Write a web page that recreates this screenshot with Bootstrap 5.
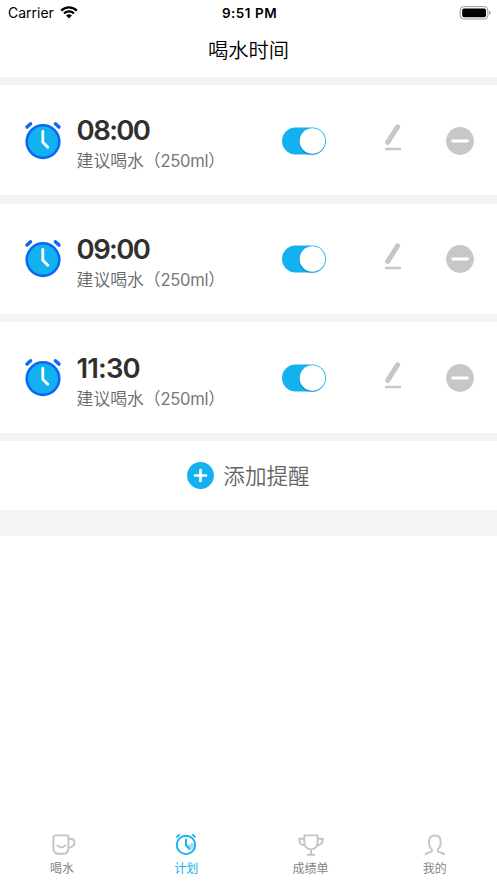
<!DOCTYPE html>
<html lang="zh-CN">
<head>
<meta charset="utf-8">
<meta name="viewport" content="width=device-width, initial-scale=1">
<title>喝水时间</title>
<link href="https://cdn.jsdelivr.net/npm/bootstrap@5.3.0/dist/css/bootstrap.min.css" rel="stylesheet">
<style>
body { font-family: Inter, "Noto Sans CJK SC", sans-serif; color: #000; height: 883px; overflow: hidden; }
svg { display: block; flex-shrink: 0; }
.status-bar { height: 26px; padding: 0 6px 0 8px; font-size: 14px; line-height: 26px; }
.status-bar .clock-text { font-weight: 600; font-size: 13.5px; letter-spacing: .5px; }
.side { flex: 1 1 0; }
.wifi { margin-left: 6px; }
.page-title { height: 51px; font-size: 20.3px; line-height: 49px; font-weight: 350; }
.plan { background: #f4f4f4; padding: 8px 0 26px; gap: 8.4px; }
.reminder { height: 110.3px; padding: 1px 23px 0 24px; background: #fff; }
.reminder .alarm { margin-bottom: 2px; }
.reminder .info { width: 204px; margin-left: 14.6px; padding-top: 5px; }
.reminder .time { font-size: 27.5px; line-height: 36px; font-weight: 600; color: #303030; letter-spacing: -1.6px; }
.reminder .time.slim { letter-spacing: -.9px; }
.reminder .hint { font-size: 16.8px; line-height: 26px; color: #666; font-weight: 350; white-space: nowrap; }
.reminder .amount { font-size: 16.6px; letter-spacing: -.3px; color: #777; font-weight: 400; }
.reminder .pencil { margin: 0 44px 5px auto; }
.add-row { height: 68.7px; padding-top: 1px; background: #fff; color: #666; font-size: 21.6px; font-weight: 350; gap: 9px; }
.tab-bar { height: 56px; }
.tab { flex: 1 1 0; color: #858585; font-size: 12px; line-height: 20px; text-decoration: none; }
.tab svg { fill: none; stroke: #c4c4c4; stroke-width: 1.9; stroke-linecap: round; stroke-linejoin: round; }
.tab.current { color: #13b1ef; }
.tab.current svg { stroke: #13b1ef; }
</style>
</head>
<body class="d-flex flex-column bg-white m-0">
<svg class="d-none">
  <symbol id="alarm" viewBox="0 0 38 42">
    <circle cx="19" cy="22.6" r="16.3" fill="#13b1ef" stroke="#0c68f4" stroke-width="2.6"/>
    <path d="M3 8.1 6.6 4.7M35 8.1 31.4 4.7" stroke="#0c68f4" stroke-width="3.4" stroke-linecap="round"/>
    <path d="M18.8 12.3v10.9l5 5" fill="none" stroke="#fff" stroke-width="2.8" stroke-linecap="round" stroke-linejoin="round"/>
  </symbol>
  <symbol id="toggle" viewBox="0 0 46 30">
    <rect x="1" y="1.5" width="44" height="27" rx="13.5" fill="#13b1ef"/>
    <circle cx="31" cy="15.8" r="13.2" fill="#087eaf" opacity=".5"/>
    <circle cx="31.4" cy="15" r="12.8" fill="#fff"/>
  </symbol>
  <symbol id="pencil" viewBox="0 0 18 28">
    <path d="M3.7 18.4 13.6 2.9" stroke="#c7c7c7" stroke-width="5" stroke-linecap="round"/>
    <path d="M2.1 25h13.8" stroke="#c7c7c7" stroke-width="2.4" stroke-linecap="round"/>
  </symbol>
  <symbol id="minus" viewBox="0 0 28 28">
    <circle cx="14" cy="14" r="13.9" fill="#c7c7c7"/>
    <path d="M6.7 14h14.8" stroke="#fff" stroke-width="2.9" stroke-linecap="round"/>
  </symbol>
</svg>

<div class="status-bar d-flex align-items-center">
  <div class="side d-flex align-items-center">
    <span>Carrier</span>
    <svg class="wifi" width="18" height="14" viewBox="0 0 18 14">
      <path d="M1.2 4.6a11.1 11.1 0 0 1 15.6 0M4 7.5a7.1 7.1 0 0 1 10 0" fill="none" stroke="#000" stroke-width="2.3"/>
      <path d="M6.1 9.6a4.1 4.1 0 0 1 5.8 0L9 12.5z"/>
    </svg>
  </div>
  <span class="clock-text">9:51 PM</span>
  <div class="side d-flex justify-content-end">
    <svg width="32" height="14" viewBox="0 0 32 14">
      <rect x="1.2" y=".6" width="27.6" height="12.4" rx="3.5" fill="none" stroke="#999"/>
      <rect x="3.2" y="2.4" width="23.8" height="8.9" rx="1.8"/>
      <path d="M29.9 4.8q1.7.5 1.7 2t-1.7 2z" fill="#999"/>
    </svg>
  </div>
</div>
<h1 class="page-title text-center m-0">喝水时间</h1>

<main class="plan d-flex flex-column">
  <section class="reminder d-flex align-items-center">
    <svg class="alarm" width="38" height="42"><use href="#alarm"/></svg>
    <div class="info"><div class="time">08:00</div><div class="hint">建议喝水（<span class="amount">250ml</span>）</div></div>
    <svg width="46" height="30"><use href="#toggle"/></svg>
    <svg class="pencil" width="18" height="28"><use href="#pencil"/></svg>
    <svg width="28" height="28"><use href="#minus"/></svg>
  </section>
  <section class="reminder d-flex align-items-center">
    <svg class="alarm" width="38" height="42"><use href="#alarm"/></svg>
    <div class="info"><div class="time">09:00</div><div class="hint">建议喝水（<span class="amount">250ml</span>）</div></div>
    <svg width="46" height="30"><use href="#toggle"/></svg>
    <svg class="pencil" width="18" height="28"><use href="#pencil"/></svg>
    <svg width="28" height="28"><use href="#minus"/></svg>
  </section>
  <section class="reminder d-flex align-items-center">
    <svg class="alarm" width="38" height="42"><use href="#alarm"/></svg>
    <div class="info"><div class="time slim">11:30</div><div class="hint">建议喝水（<span class="amount">250ml</span>）</div></div>
    <svg width="46" height="30"><use href="#toggle"/></svg>
    <svg class="pencil" width="18" height="28"><use href="#pencil"/></svg>
    <svg width="28" height="28"><use href="#minus"/></svg>
  </section>
  <div class="add-row d-flex align-items-center justify-content-center">
    <svg width="27" height="27" viewBox="0 0 27 27"><circle cx="13.5" cy="13.5" r="13.4" fill="#13b1ef"/><path d="M8 13.5h11M13.5 8v11" stroke="#fff" stroke-width="2.7" stroke-linecap="round"/></svg>
    <span>添加提醒</span>
  </div>
</main>

<nav class="tab-bar d-flex mt-auto">
  <a class="tab d-flex flex-column align-items-center" href="#">
    <svg width="28" height="32" viewBox="0 0 28 32"><path d="M7.4 8.4h11.5q1.5 0 1.5 1.5v11.3q0 5.6-5.6 5.6H11q-5.6 0-5.6-5.6V10.4q0-2 2-2zM20.4 12h2.7q3.4 0 3.4 3.3 0 4.9-6.3 5.6M9.4 18.4q4 4 8 0"/></svg>
    <span>喝水</span>
  </a>
  <a class="tab current d-flex flex-column align-items-center" href="#">
    <svg width="28" height="32" viewBox="0 0 28 32"><path d="M14 18.4 21.2 15.5Q23 18.2 20.8 21.5 18.8 24 16.5 23.6z" fill="#a6dcf5" stroke="none"/><circle cx="14" cy="17.9" r="9.2"/><path d="M14 12.4v6l3.2 3M5 9.8l2-2M23 9.8l-2-2"/></svg>
    <span>计划</span>
  </a>
  <a class="tab d-flex flex-column align-items-center" href="#">
    <svg width="28" height="32" viewBox="0 0 28 32"><path d="M7.4 8.4h13.2v7.3c0 4-3 6.7-6.6 6.7s-6.6-2.7-6.6-6.7zM7.4 11.8H2.2c0 4.2 2 6.6 5.7 6.6M20.6 11.8h5.2c0 4.2-2 6.6-5.7 6.6M14 22.4v5M10.7 27.7h6.6"/></svg>
    <span>成绩单</span>
  </a>
  <a class="tab d-flex flex-column align-items-center" href="#">
    <svg width="28" height="32" viewBox="0 0 28 32"><path d="M4.5 27.3q1.5-1.4 4.2-2 2.4-.6 2.4-1.8 0-.8-1.1-1.9c-1.4-1.5-2-3.1-2-5.3v-2.1c0-3.5 2.1-5.7 5.8-5.7s5.8 2.2 5.8 5.7v2.1c0 2.2-.6 3.8-2 5.3q-1.1 1.1-1.1 1.9 0 1.2 2.4 1.8 2.7.6 4.2 2"/></svg>
    <span>我的</span>
  </a>
</nav>
<script src="https://cdn.jsdelivr.net/npm/bootstrap@5.3.0/dist/js/bootstrap.bundle.min.js"></script>
</body>
</html>
